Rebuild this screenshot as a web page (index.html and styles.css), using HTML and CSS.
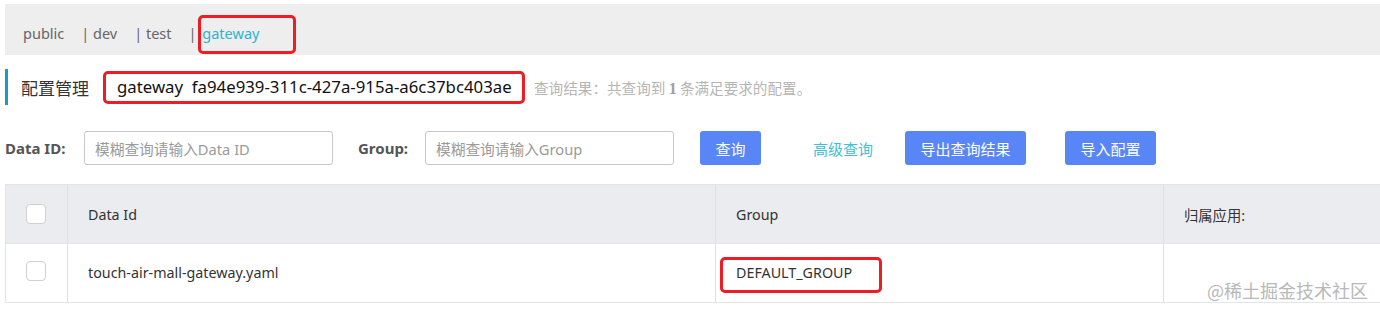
FILE: index.html
```html
<!DOCTYPE html>
<html>
<head>
<meta charset="utf-8">
<link rel="stylesheet" href="styles.css">
</head>
<body>
<div class="page">
  <div class="nav">
    <span class="ns">public</span>
    <span class="ns sep">| dev</span>
    <span class="ns sep">| test</span>
    <span class="ns sep">| <span class="active">gateway</span></span>
    <div class="mark mark-nav"></div>
  </div>

  <div class="title-row">
    <div class="title">配置管理</div>
    <div class="ns-id">gateway&nbsp;&nbsp;fa94e939-311c-427a-915a-a6c37bc403ae</div>
    <div class="result">查询结果：共查询到 <b>1</b> 条满足要求的配置。</div>
  </div>

  <div class="filter">
    <label class="lbl">Data ID:</label>
    <div class="input">模糊查询请输入Data ID</div>
    <label class="lbl lbl-group">Group:</label>
    <div class="input">模糊查询请输入Group</div>
    <button class="btn btn-query">查询</button>
    <span class="link">高级查询</span>
    <button class="btn btn-export">导出查询结果</button>
    <button class="btn btn-import">导入配置</button>
  </div>

  <div class="table">
    <div class="row head">
      <div class="cell c-chk"><span class="chk"></span></div>
      <div class="cell c-id">Data Id</div>
      <div class="cell c-group">Group</div>
      <div class="cell c-app">归属应用:</div>
    </div>
    <div class="row body">
      <div class="cell c-chk"><span class="chk"></span></div>
      <div class="cell c-id">touch-air-mall-gateway.yaml</div>
      <div class="cell c-group"><span class="grp">DEFAULT_GROUP<span class="mark mark-grp"></span></span></div>
      <div class="cell c-app"></div>
    </div>
    <div class="watermark">@稀土掘金技术社区</div>
  </div>
</div>
</body>
</html>
```

FILE: styles.css
```css
* { box-sizing: border-box; }
html, body { margin: 0; padding: 0; background: #fff; }
body {
  font-family: "Noto Sans", "Noto Sans CJK SC", sans-serif;
  color: #333;
  width: 1380px;
  height: 314px;
  overflow: hidden;
}
.page { padding: 4px 0 0 5px; }

.nav {
  position: relative;
  height: 51px;
  background: #eeeeee;
  display: flex;
  align-items: center;
  padding: 6px 0 0 18px;
  font-size: 14.5px;
  color: #666;
}
.ns { white-space: pre; }
.sep { margin-left: 17px; }
.active { color: #2db3cf; margin-left: 2px; }
.mark {
  position: absolute;
  border: 3px solid #ee1c24;
  border-radius: 5px;
}
.mark-nav { left: 193px; top: 11px; width: 98px; height: 39px; }

.title-row {
  margin-top: 14px;
  height: 36px;
  display: flex;
  align-items: center;
  border-left: 3px solid #1d9ac4;
}
.title {
  font-size: 17px;
  color: #333;
  margin-left: 13px;
  font-family: "Noto Sans CJK SC", sans-serif;
}
.ns-id {
  margin-left: 14px;
  height: 33px;
  border: 3px solid #ee1c24;
  border-radius: 5px;
  padding: 0 0 2px 11px;
  width: 422px;
  display: flex;
  align-items: center;
  font-size: 16.8px;
  color: #111;
}
.result {
  margin-left: 9px;
  font-size: 14.6px;
  color: #b5b5b5;
  font-family: "Noto Sans CJK SC", sans-serif;
}
.result b { color: #a0a0a0; font-family: "Liberation Serif", serif; font-size: 16px; }

.filter {
  margin-top: 26px;
  height: 34px;
  display: flex;
  align-items: center;
}
.lbl {
  font-size: 15px;
  font-weight: bold;
  color: #555;
  width: 79px;
}
.lbl-group { width: 67px; margin-left: 25px; }
.input {
  width: 249px;
  height: 34px;
  border: 1px solid #c8c8c8;
  border-radius: 3px;
  padding-left: 10px;
  display: flex;
  align-items: center;
  font-size: 14.7px;
  color: #9a9a9a;
  font-family: "Noto Sans", "Noto Sans CJK SC", sans-serif;
}
.btn {
  height: 34px;
  border: none;
  border-radius: 3px;
  background: #5886f6;
  color: #fff;
  font-size: 15px;
  font-family: "Noto Sans CJK SC", sans-serif;
  padding: 0;
  margin: 0;
}
.btn-query { width: 61px; margin-left: 26px; }
.link { margin-left: 52px; font-size: 15px; color: #3fbed6; font-family: "Noto Sans CJK SC", sans-serif; }
.btn-export { width: 121px; margin-left: 32px; }
.btn-import { width: 91px; margin-left: 39px; }

.table {
  position: relative;
  margin-top: 19px;
  border-top: 1px solid #e3e4e7;
  border-left: 1px solid #e3e4e7;
}
.row {
  display: flex;
  height: 59px;
  border-bottom: 1px solid #e3e4e7;
}
.head { background: #ebecef; }
.cell {
  display: flex;
  align-items: center;
  font-size: 14.3px;
  color: #333;
  border-right: 1px solid #dfe0e3;
}
.c-chk { width: 62px; justify-content: center; padding-right: 2px; }
.c-id { width: 648px; padding-left: 20px; }
.c-group { width: 448px; padding-left: 20px; }
.c-app { flex: 1; padding-left: 20px; border-right: none; }
.body .c-id, .body .c-group { padding-bottom: 2px; }
.chk {
  width: 20px;
  height: 20px;
  border: 1px solid #cfcfcf;
  border-radius: 4px;
  background: #fff;
}
.body .chk { margin-top: -4px; }
.grp { position: relative; }
.mark-grp { left: -16px; top: -6px; width: 162px; height: 36px; }
.watermark {
  position: absolute;
  right: 12px;
  bottom: 0;
  font-size: 18px;
  color: #b8b8b8;
  font-family: "Noto Sans CJK SC", sans-serif;
}
```
